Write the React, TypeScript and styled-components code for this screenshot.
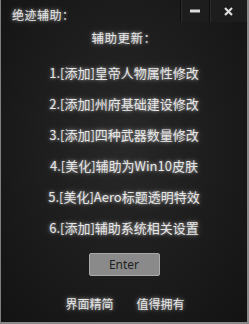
import React from "react";
import styled, { createGlobalStyle } from "styled-components";

const Global = createGlobalStyle`
  html, body { margin: 0; padding: 0; background: #111; }
  body { font-family: "Noto Sans CJK SC", "Noto Sans", sans-serif; }
`;

const Window = styled.div`
  box-sizing: border-box;
  width: 249px;
  height: 324px;
  border-left: 1px solid #7e7e7e;
  border-right: 2px solid #8a8a8a;
  border-bottom: 2px solid #8a8a8a;
  background: radial-gradient(ellipse at 50% 45%, #282828 0%, #1c1c1c 55%, #131313 100%);
  display: flex;
  flex-direction: column;
  align-items: center;
  overflow: hidden;
`;

const TitleBar = styled.div`
  align-self: stretch;
  height: 28px;
  display: flex;
  justify-content: space-between;
  align-items: flex-start;
`;

const Glow = `
  color: #e6e6e6;
  text-shadow: 0 0 3px rgba(255,255,255,0.6), 0 0 7px rgba(255,255,255,0.3);
`;

const Title = styled.div`
  ${Glow}
  font-size: 12px;
  line-height: 16px;
  margin: 7px 0 0 11px;
  letter-spacing: 0.5px;
`;

const Controls = styled.div`
  display: flex;
  height: 22px;
`;

const CtrlButton = styled.div<{ $w: number }>`
  width: ${(p) => p.$w}px;
  height: 22px;
  background: #1d1d1d;
  border-left: 1px solid #0c0c0c;
  box-shadow: inset 1px 0 0 #2c2c2c;
  display: flex;
  align-items: center;
  justify-content: center;
`;

const Heading = styled.div`
  ${Glow}
  font-size: 12.5px;
  line-height: 16px;
  margin-top: 2px;
  letter-spacing: 0.5px;
`;

const List = styled.div`
  display: flex;
  flex-direction: column;
  align-items: center;
  gap: 15px;
  margin-top: 19px;
`;

const Item = styled.div`
  ${Glow}
  font-size: 13px;
  line-height: 16px;
  white-space: nowrap;
`;

const EnterButton = styled.button`
  margin-top: 17px;
  width: 71px;
  height: 23px;
  box-sizing: border-box;
  background: #8a8a8a;
  border: 1px solid #a9a9a9;
  border-radius: 2px;
  color: #1e1e1e;
  font-family: "Noto Sans", "Open Sans", sans-serif;
  font-size: 12px;
  padding: 0;
  line-height: 20px;
`;

const Footer = styled.div`
  display: flex;
  gap: 23px;
  margin-top: 20px;
  margin-left: 2px;
`;

const FooterLink = styled.div`
  ${Glow}
  font-size: 12px;
  line-height: 16px;
`;

const items = [
  "1.[添加]皇帝人物属性修改",
  "2.[添加]州府基础建设修改",
  "3.[添加]四种武器数量修改",
  "4.[美化]辅助为Win10皮肤",
  "5.[美化]Aero标题透明特效",
  "6.[添加]辅助系统相关设置",
];

export default function App() {
  return (
    <>
      <Global />
      <Window>
        <TitleBar>
          <Title>绝迹辅助：</Title>
          <Controls>
            <CtrlButton $w={28}>
              <svg width="11" height="4" viewBox="0 0 11 4">
                <rect x="0" y="0.5" width="10" height="3" fill="#dcdcdc" />
              </svg>
            </CtrlButton>
            <CtrlButton $w={37}>
              <svg width="9" height="9" viewBox="0 0 9 9">
                <path d="M1 1 L8 8 M8 1 L1 8" stroke="#dcdcdc" strokeWidth="2.2" />
              </svg>
            </CtrlButton>
          </Controls>
        </TitleBar>
        <Heading>辅助更新：</Heading>
        <List>
          {items.map((t) => (
            <Item key={t}>{t}</Item>
          ))}
        </List>
        <EnterButton>Enter</EnterButton>
        <Footer>
          <FooterLink>界面精简</FooterLink>
          <FooterLink>值得拥有</FooterLink>
        </Footer>
      </Window>
    </>
  );
}
